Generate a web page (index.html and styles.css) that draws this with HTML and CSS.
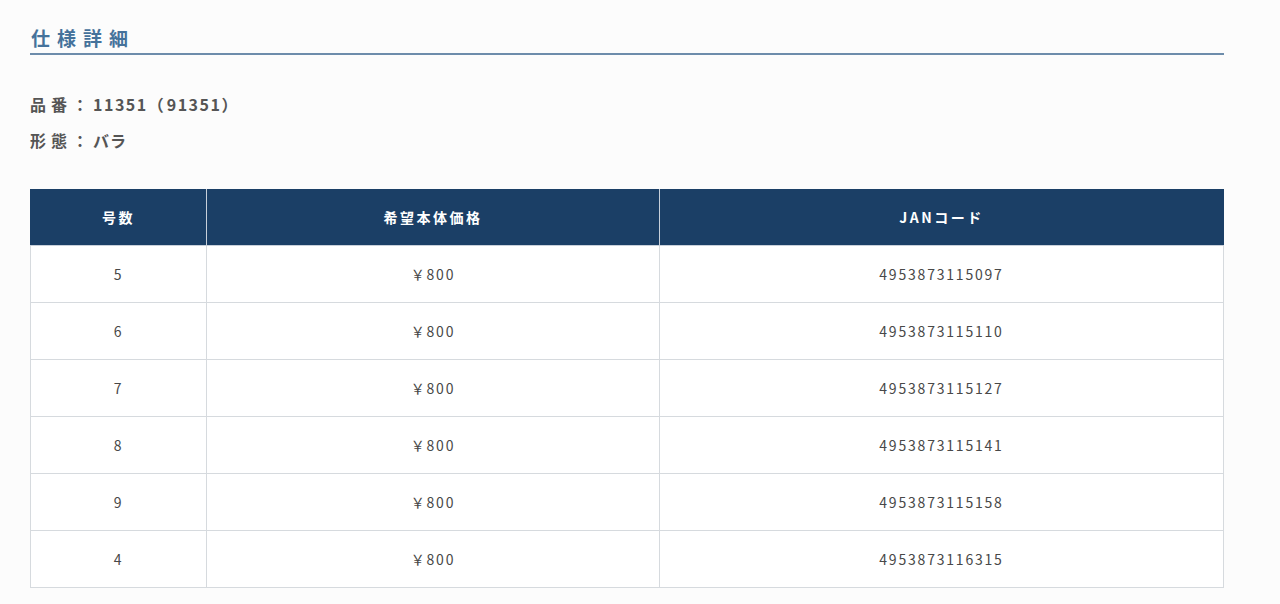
FILE: index.html
```html
<!DOCTYPE html>
<html lang="ja">
<head>
<meta charset="utf-8">
<link rel="stylesheet" href="styles.css">
</head>
<body>
<div class="page">
  <h2 class="title">仕様詳細</h2>
  <div class="info">
    <p class="info-line"><span class="label">品番：</span><span class="num">11351</span><span class="paren">（</span><span class="num">91351</span><span class="paren">）</span></p>
    <p class="info-line"><span class="label">形態：</span><span class="val">バラ</span></p>
  </div>
  <table class="spec">
    <colgroup>
      <col class="c1"><col class="c2"><col class="c3">
    </colgroup>
    <thead>
      <tr><th>号数</th><th>希望本体価格</th><th>JANコード</th></tr>
    </thead>
    <tbody>
      <tr><td>5</td><td>￥800</td><td>4953873115097</td></tr>
      <tr><td>6</td><td>￥800</td><td>4953873115110</td></tr>
      <tr><td>7</td><td>￥800</td><td>4953873115127</td></tr>
      <tr><td>8</td><td>￥800</td><td>4953873115141</td></tr>
      <tr><td>9</td><td>￥800</td><td>4953873115158</td></tr>
      <tr><td>4</td><td>￥800</td><td>4953873116315</td></tr>
    </tbody>
  </table>
</div>
</body>
</html>
```
FILE: styles.css
```css
html, body {
  margin: 0;
  padding: 0;
  background: #fcfcfc;
}
body {
  font-family: "Noto Sans CJK JP", "Noto Sans", sans-serif;
  color: #444;
}
.page {
  padding: 24px 56px 0 30px;
}
.title {
  margin: 0;
  font-size: 19px;
  font-weight: 700;
  letter-spacing: 7px;
  color: #45729b;
  line-height: 28px;
  padding-left: 1px;
  padding-bottom: 1px;
  border-bottom: 2px solid #6d8cab;
}
.info {
  padding-top: 35px;
}
.info-line {
  margin: 0 0 7px 0;
  font-size: 16px;
  font-weight: 700;
  line-height: 29px;
  color: #555;
}
.label {
  letter-spacing: 5px;
}
.num {
  letter-spacing: 1.5px;
}
.paren {
  letter-spacing: 3px;
}
.val {
  letter-spacing: 1px;
}
.spec {
  margin-top: 34px;
  width: 100%;
  border-collapse: collapse;
  table-layout: fixed;
}
.c1 { width: 176px; }
.c2 { width: 453px; }
.spec th {
  background: #1b3f66;
  color: #fff;
  font-size: 14px;
  font-weight: 700;
  letter-spacing: 2.5px;
  height: 56px;
  padding: 0;
  border: 1px solid #c8d0da;
  border-top: none;
}
.spec th:first-child { border-left: 1px solid #1b3f66; }
.spec th:last-child { border-right: 1px solid #1b3f66; }
.spec td {
  text-align: center;
  font-size: 14px;
  letter-spacing: 1.8px;
  color: #484848;
  height: 56px;
  padding: 0;
  border: 1px solid #d6dade;
  background: #fff;
}
```
